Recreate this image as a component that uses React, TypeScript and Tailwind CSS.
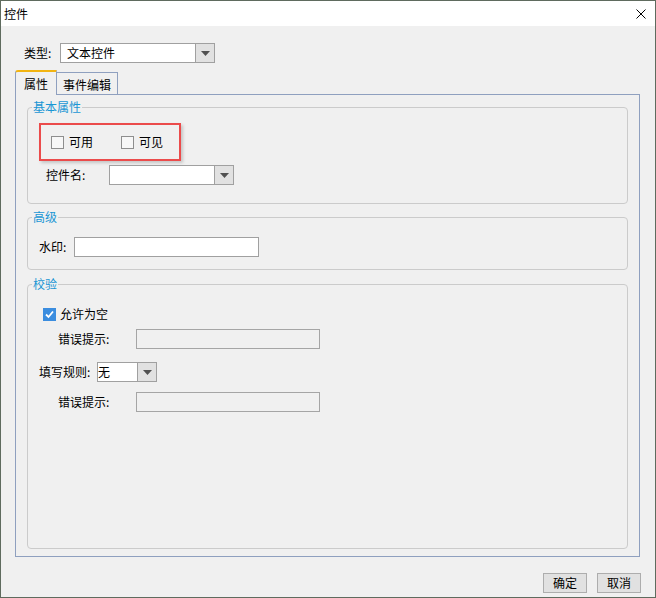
import React from 'react';

const FONT = { fontFamily: '"Noto Sans CJK SC", "Microsoft YaHei", sans-serif' };

const Arrow: React.FC = () => (
    <svg width="9" height="5" viewBox="0 0 9 5">
        <polygon points="0,0 9,0 4.5,5" fill="#505050" />
    </svg>
);

// Windows-style combo box: white field + grey drop button
const Combo: React.FC<{ value?: string; width: string; textPad?: string }> = ({ value = '', width, textPad = 'pl-[6px]' }) => (
    <div className={`${width} h-[20px] flex border border-[#a0a0a0] bg-white`}>
        <div className={`flex-1 flex items-center ${textPad} leading-[16px] text-black`}>{value}</div>
        <div className="w-[19px] flex items-center justify-center border-l border-[#a0a0a0] bg-[#e1e1e1]">
            <Arrow />
        </div>
    </div>
);

const Check: React.FC<{ checked?: boolean }> = ({ checked }) =>
    checked ? (
        <div className="w-[13px] h-[13px] bg-[#3b8ddf] flex items-center justify-center">
            <svg width="11" height="11" viewBox="0 0 11 11">
                <path d="M2 5.5 L4.5 8 L9 2.5" stroke="#fff" strokeWidth="1.8" fill="none" />
            </svg>
        </div>
    ) : (
        <div className="w-[13px] h-[13px] border border-[#8e8e8e] bg-[#f7f7f7]" />
    );

const Group: React.FC<{ title: string; className?: string; children: React.ReactNode }> = ({ title, className = '', children }) => (
    <fieldset className={`border border-[#cbcbcb] rounded-[4px] ${className}`}>
        <legend className="ml-[4px] px-[1px] leading-[16px] text-[#1a96d4]">{title}</legend>
        {children}
    </fieldset>
);

const App: React.FC = () => {
    return (
        <div className="w-[656px] h-[598px] border border-[#5f6b5e] bg-[#f0f0f0] flex flex-col text-[12px] text-black" style={FONT}>

            {/* --- Title bar --- */}
            <div className="h-[25px] bg-white flex items-center justify-between pl-[3px] pr-[9px]">
                <span className="leading-[16px]">控件</span>
                <svg width="10" height="10" viewBox="0 0 10 10">
                    <path d="M0.5 0.5 L9.5 9.5 M9.5 0.5 L0.5 9.5" stroke="#000" strokeWidth="1" />
                </svg>
            </div>

            <div className="flex-1 flex flex-col px-[14px]">

                {/* --- Type --- */}
                <div className="mt-[17px] h-[20px] flex items-center">
                    <span className="ml-[9px] w-[36px] leading-[16px]">类型:</span>
                    <Combo value="文本控件" width="w-[155px]" />
                </div>

                {/* --- Tabs --- */}
                <div className="mt-[7px] h-[24px] flex items-end">
                    <div className="relative z-10 -mb-px w-[42px] h-[25px] flex items-center pl-[8px] bg-[#f0f0f0] border-l border-r border-[#8fa0bf] border-t-2 border-t-[#f2b411] rounded-tl-[3px]">
                        <span className="leading-[16px]">属性</span>
                    </div>
                    <div className="w-[61px] h-[22px] flex items-center pl-[6px] pt-[2px] border-t border-r border-[#8fa0bf]">
                        <span className="leading-[16px]">事件编辑</span>
                    </div>
                </div>

                {/* --- Tab panel --- */}
                <div className="flex-1 mr-[1px] border border-[#8fa0bf] px-[11px] pb-[7px] flex flex-col">

                    <Group title="基本属性" className="mt-[4px] pb-[18px]">
                        <div className="mt-[8px] ml-[11px] w-[142px] h-[38px] border-2 border-[#eb4b4b] shadow-[2px_2px_3px_rgba(0,0,0,0.18)] flex items-center pl-[10px]">
                            <Check />
                            <span className="ml-[5px] leading-[16px]">可用</span>
                            <div className="ml-[28px]"><Check /></div>
                            <span className="ml-[5px] leading-[16px]">可见</span>
                        </div>
                        <div className="mt-[4px] flex items-center">
                            <span className="ml-[18px] w-[63px] leading-[16px]">控件名:</span>
                            <Combo width="w-[125px]" />
                        </div>
                    </Group>

                    <Group title="高级" className="mt-[5px] pb-[12px]">
                        <div className="mt-[12px] flex items-center">
                            <span className="ml-[11px] w-[35px] leading-[16px]">水印:</span>
                            <div className="w-[185px] h-[20px] border border-[#a0a0a0] bg-white" />
                        </div>
                    </Group>

                    <Group title="校验" className="mt-[6px] flex-1">
                        <div className="mt-[14px] h-[16px] flex items-center ml-[15px]">
                            <Check checked />
                            <span className="ml-[4px] leading-[16px]">允许为空</span>
                        </div>
                        <div className="mt-[7px] flex items-center">
                            <span className="ml-[30px] w-[78px] leading-[16px]">错误提示:</span>
                            <div className="w-[184px] h-[20px] border border-[#a5a5a5] bg-[#f0f0f0]" />
                        </div>
                        <div className="mt-[13px] flex items-center">
                            <span className="ml-[11px] w-[58px] leading-[16px]">填写规则:</span>
                            <Combo value="无" width="w-[60px]" textPad="pl-0" />
                        </div>
                        <div className="mt-[10px] flex items-center">
                            <span className="ml-[30px] w-[78px] leading-[16px]">错误提示:</span>
                            <div className="w-[184px] h-[20px] border border-[#a5a5a5] bg-[#f0f0f0]" />
                        </div>
                    </Group>
                </div>

                {/* --- Buttons --- */}
                <div className="mt-[16px] mb-[4px] h-[20px] flex justify-end gap-[10px]">
                    <button className="w-[44px] h-[20px] border border-[#adadad] bg-[#e1e1e1] leading-[16px]">确定</button>
                    <button className="w-[44px] h-[20px] border border-[#adadad] bg-[#e1e1e1] leading-[16px]">取消</button>
                </div>
            </div>
        </div>
    );
};

export default App;
